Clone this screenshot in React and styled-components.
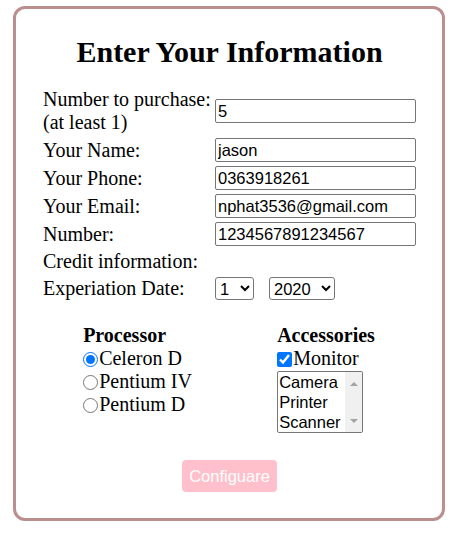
import React, { useState } from 'react';
import styled, { createGlobalStyle } from 'styled-components';

const GlobalStyle = createGlobalStyle`
  body {
    margin: 0;
    background: #fff;
    font-family: "Liberation Serif", "Times New Roman", serif;
    color: #000;
  }
`;

const Page = styled.div`
  padding: 6px 0 14px 13px;
`;

const Card = styled.form`
  box-sizing: border-box;
  width: 432px;
  border: 3px solid #bc8f8f;
  border-radius: 12px;
  padding: 26px 0 26px 1px;
  display: flex;
  flex-direction: column;
  align-items: center;
`;

const Title = styled.h1`
  margin: 0 0 16px;
  font-size: 30px;
  line-height: 34px;
  font-weight: 700;
`;

const FormTable = styled.table`
  border-spacing: 2px;
  font-size: 20px;
  line-height: 23px;

  & td {
    padding: 1px;
    vertical-align: middle;
  }

  & td.label {
    width: 168px;
  }
`;

const TextInput = styled.input`
  display: block;
  box-sizing: border-box;
  width: 201px;
  height: 24px;
  margin: 0;
  padding: 1px 2px;
  border: 1px solid #767676;
  border-radius: 2px;
  font-family: "Liberation Sans", Arial, sans-serif;
  font-size: 16.5px;
  color: #000;
`;

const DateRow = styled.div`
  display: flex;
  gap: 15px;
`;

const Select = styled.select`
  box-sizing: border-box;
  width: ${(p) => p.$width}px;
  height: 23px;
  margin: 0;
  font-family: "Liberation Sans", Arial, sans-serif;
  font-size: 16.5px;
  color: #000;
  border: 1px solid #767676;
  border-radius: 3px;
  background: #fff;
`;

const Options = styled.div`
  display: flex;
  margin-top: 21px;
  margin-left: -1px;
  font-size: 20px;
  line-height: 23px;
`;

const Column = styled.div`
  width: ${(p) => (p.$width ? `${p.$width}px` : 'auto')};
  display: flex;
  flex-direction: column;
  align-items: flex-start;
`;

const Heading = styled.div`
  font-weight: 700;
`;

const Choice = styled.label`
  display: flex;
  align-items: center;
  height: 23px;

  & input {
    width: ${(p) => p.$box}px;
    height: ${(p) => p.$box}px;
    margin: 1px 1px 0 0;
    accent-color: #0075ff;
  }
`;

const ListBox = styled.div`
  box-sizing: border-box;
  display: flex;
  width: 86px;
  height: 62px;
  margin-top: 1px;
  border: 1px solid #767676;
  border-radius: 2px;
  overflow: hidden;
  font-family: "Liberation Sans", Arial, sans-serif;
  font-size: 16.5px;
  line-height: 20px;
`;

const ListItems = styled.div`
  flex: 1;
  overflow: hidden;
`;

const ListItem = styled.div`
  padding: 0 1px;
  height: 20px;
  white-space: nowrap;
  background: ${(p) => (p.$selected ? '#cecece' : 'transparent')};
`;

const Gutter = styled.div`
  width: 17px;
  flex-shrink: 0;
  background: #f0f0f0;
  display: flex;
  flex-direction: column;
  align-items: center;
  justify-content: space-between;
  padding: 10px 0 9px;
  box-sizing: border-box;
`;

const Arrow = styled.span`
  width: 0;
  height: 0;
  border-left: 4px solid transparent;
  border-right: 4px solid transparent;
  ${(p) =>
    p.$up
      ? 'border-bottom: 4px solid #a3a3a3;'
      : 'border-top: 4px solid #a3a3a3;'}
`;

const SubmitButton = styled.button`
  margin-top: 27px;
  width: 95px;
  height: 32px;
  border: none;
  border-radius: 4px;
  background: #ffc0cb;
  color: #fff;
  font-family: "Liberation Sans", Arial, sans-serif;
  font-size: 16.5px;
  padding: 0;
`;

const fields = [
  { id: 'name', label: 'Your Name:', value: 'jason' },
  { id: 'phone', label: 'Your Phone:', value: '0363918261' },
  { id: 'email', label: 'Your Email:', value: 'nphat3536@gmail.com' },
  { id: 'number', label: 'Number:', value: '1234567891234567' },
];

const processors = ['Celeron D', 'Pentium IV', 'Pentium D'];
const accessories = ['Camera', 'Printer', 'Scanner'];

const App = () => {
  const [processor, setProcessor] = useState('Celeron D');
  const [picked, setPicked] = useState([]);

  const toggle = (name) =>
    setPicked((list) =>
      list.includes(name) ? list.filter((n) => n !== name) : [...list, name]
    );

  return (
    <Page>
      <GlobalStyle />
      <Card onSubmit={(event) => event.preventDefault()}>
        <Title>Enter Your Information</Title>
        <FormTable>
          <tbody>
            <tr>
              <td className="label">
                Number to purchase:
                <br />
                (at least 1)
              </td>
              <td>
                <TextInput defaultValue="5" />
              </td>
            </tr>
            {fields.map((field) => (
              <tr key={field.id}>
                <td className="label">{field.label}</td>
                <td>
                  <TextInput defaultValue={field.value} />
                </td>
              </tr>
            ))}
            <tr>
              <td className="label">Credit information:</td>
              <td />
            </tr>
            <tr>
              <td className="label">Experiation Date:</td>
              <td>
                <DateRow>
                  <Select $width={39} defaultValue="1">
                    {Array.from({ length: 12 }, (_, i) => (
                      <option key={i}>{i + 1}</option>
                    ))}
                  </Select>
                  <Select $width={66} defaultValue="2020">
                    {[2020, 2021, 2022, 2023, 2024].map((y) => (
                      <option key={y}>{y}</option>
                    ))}
                  </Select>
                </DateRow>
              </td>
            </tr>
          </tbody>
        </FormTable>
        <Options>
          <Column $width={194}>
            <Heading>Processor</Heading>
            {processors.map((name) => (
              <Choice key={name} $box={15}>
                <input
                  type="radio"
                  name="processor"
                  checked={processor === name}
                  onChange={() => setProcessor(name)}
                />
                {name}
              </Choice>
            ))}
          </Column>
          <Column>
            <Heading>Accessories</Heading>
            <Choice $box={15}>
              <input type="checkbox" defaultChecked />
              Monitor
            </Choice>
            <ListBox role="listbox" aria-multiselectable="true">
              <ListItems>
                {accessories.map((name) => (
                  <ListItem
                    key={name}
                    role="option"
                    aria-selected={picked.includes(name)}
                    $selected={picked.includes(name)}
                    onClick={() => toggle(name)}
                  >
                    {name}
                  </ListItem>
                ))}
              </ListItems>
              <Gutter>
                <Arrow $up />
                <Arrow />
              </Gutter>
            </ListBox>
          </Column>
        </Options>
        <SubmitButton type="submit">Configuare</SubmitButton>
      </Card>
    </Page>
  );
};

export default App;
